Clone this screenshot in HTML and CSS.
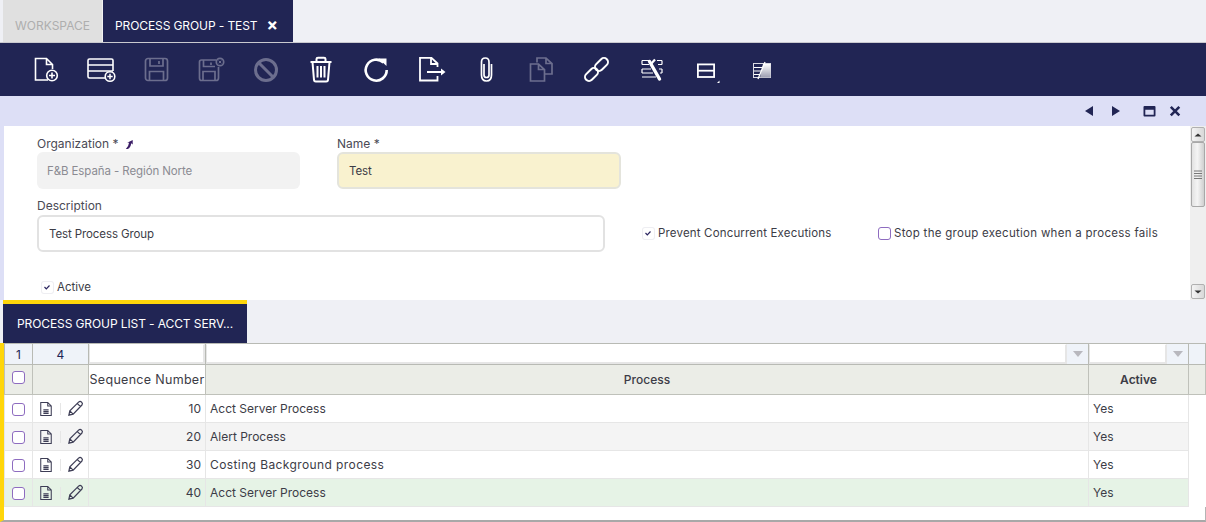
FILE: index.html
```html
<!DOCTYPE html>
<html lang="en">
<head>
<meta charset="utf-8">
<title>Process Group - Test</title>
<link rel="stylesheet" href="styles.css">
</head>
<body>
<div class="tabs">
  <div class="tab tab-off">WORKSPACE</div>
  <div class="tab tab-on"><span>PROCESS GROUP - TEST</span><span class="tab-x">×</span></div>
</div>
<div class="toolbar">
  <button class="tb"><svg viewBox="0 0 30 30" class="ic"><path d="M17 25H4.500V3.500H15.500L21.500 9.500V14M15.500 3.500V9.500H21.500" fill="none" stroke="#fff" stroke-width="1.600"/><circle cx="21" cy="20.500" r="5.300" fill="none" stroke="#fff" stroke-width="1.600"/><path d="M18 20.500h6M21 17.500v6" stroke="#fff" stroke-width="1.600"/></svg></button>
  <button class="tb"><svg viewBox="0 0 30 30" class="ic"><path d="M19 23H3.500Q2 23 2 21.500V5.500Q2 4 3.500 4H25.500Q27 4 27 5.500V16M2 10H27M2 16H27" fill="none" stroke="#fff" stroke-width="1.600"/><circle cx="24" cy="21.500" r="4.800" fill="#212554" stroke="#fff" stroke-width="1.600"/><path d="M21.300 21.500h5.400M24 18.800v5.400" stroke="#fff" stroke-width="1.500"/></svg></button>
  <button class="tb"><svg viewBox="0 0 30 30" class="ic dim"><rect x="4.500" y="3.500" width="22" height="22" rx="2.500"/><path d="M9 3.500V11H22V3.500M8.500 25.500V16.500H22.500V25.500M18 6V9"/></svg></button>
  <button class="tb"><svg viewBox="0 0 30 30" class="ic dim"><path d="M20 5H5.500Q3.500 5 3.500 7V23Q3.500 25.500 5.500 25.500H20Q22.500 25.500 22.500 23V12"/><path d="M7.500 5V11.500H19M7 25.500V16.500H19V25.500M15 7.500V10"/><circle cx="24" cy="7" r="3.700"/><path d="M22.700 5.700l2.600 2.600M25.300 5.700l-2.600 2.600" stroke-width="1"/></svg></button>
  <button class="tb"><svg viewBox="0 0 30 30" class="ic dim thick"><circle cx="15" cy="15" r="10.500"/><path d="M7.500 7.500L22.500 22.500"/></svg></button>
  <button class="tb"><svg viewBox="0 0 30 30" class="ic line"><path d="M4.500 7H25.500M10.500 7V4Q10.500 2.800 12 2.800H18Q19.500 2.800 19.500 4V7M6.500 7L8 25Q8.200 26.500 9.700 26.500H20.300Q21.800 26.500 22 25L23.500 7M11.500 11V22.500M15 11V22.500M18.500 11V22.500" stroke-width="2"/></svg></button>
  <button class="tb"><svg viewBox="0 0 30 30" class="ic line"><path d="M22.500 7.600A10.500 10.500 0 1 0 25.700 15" stroke-width="2.600"/><path d="M17.500 3.500H25.500V11Z" fill="#fff" stroke="none"/></svg></button>
  <button class="tb"><svg viewBox="0 0 30 30" class="ic line"><path d="M21.500 12V8.500L15.500 2.800H4V25.500H21.500V21M15 3V9H21.500M11 17H28" stroke-width="1.800"/><path d="M25 13.500L29.500 17L25 20.500Z" fill="#fff" stroke="none"/></svg></button>
  <button class="tb"><svg viewBox="0 0 30 30" class="ic line"><path d="M12.500 9V20Q12.500 22.500 15 22.500Q17.500 22.500 17.500 20V7Q17.500 3 13.800 3Q10 3 10 7V20Q10 26 15 26Q20 26 20 20V9" stroke-width="1.700" transform="translate(0.500 0)"/></svg></button>
  <button class="tb"><svg viewBox="0 0 30 30" class="ic dim"><path d="M11 7.500V3H20L26 8.500V19H19M20 3V8.500H26"/><path d="M4.500 9H12.500L18.500 14.500V26H4.500ZM12.500 9V14.500H18.500"/></svg></button>
  <button class="tb"><svg viewBox="0 0 30 30" class="ic line"><rect x="3" y="15.500" width="15" height="8" rx="4" transform="rotate(-45 10.500 19.500)" stroke-width="2"/><rect x="13" y="5.500" width="15" height="8" rx="4" transform="rotate(-45 20.500 9.500)" stroke-width="2"/></svg></button>
  <button class="tb"><svg viewBox="0 0 30 30" class="ic line"><path d="M6 5.500H13M21 5.500H26M6 9.500H13M22 9.500H26M6 14H15M23 14H26M6 18H17M24 18H26M6 22H20M6 5.500V9.500M26 5.500V9.500M6 14V18M26 14V18" stroke-width="1.200"/><path d="M13.500 6.500L23.500 24" stroke-width="3.400" stroke-linecap="round"/><path d="M19 4.500L14.500 9.500" stroke-width="2.200"/></svg></button>
  <button class="tb"><svg viewBox="0 0 30 30" class="ic"><rect x="6.900" y="9.400" width="16.200" height="12.600" fill="none" stroke="#fff" stroke-width="1.800"/><path d="M7 15.700H23" stroke="#fff" stroke-width="1.800"/><path d="M26 28L28.500 28L28.500 25.500Z" fill="#fff"/></svg></button>
  <button class="tb"><svg viewBox="0 0 30 30" class="ic"><defs><linearGradient id="fade" x1="0" y1="0" x2="0" y2="1"><stop offset="0" stop-color="#ffffff"/><stop offset="1" stop-color="#9b9cb0"/></linearGradient></defs><rect x="7.500" y="8.500" width="17" height="14" fill="#212554" stroke="#d9d9e2"/><path d="M17 9H24.500V22.500H14Z" fill="url(#fade)"/><path d="M8 12.500H16M8 16H15M8 19.500H14" stroke="#fff"/><path d="M19 7L12 24" stroke="#fff" stroke-width="1.300"/></svg></button>
</div>
<div class="band">
  <svg class="nav" viewBox="0 0 106 16" width="106" height="16"><path d="M5 8L13 3V13Z M32 3L40 8L32 13Z" fill="#212554"/><path d="M64.500 3H74.500Q75.500 3 75.500 4V12.500Q75.500 13.500 74.500 13.500H64.500Q63.500 13.500 63.500 12.500V4Q63.500 3 64.500 3ZM65.300 6.800V11.700H73.700V6.800Z" fill="#212554"/><path d="M90.800 3.800L99.300 12.300M99.300 3.800L90.800 12.300" stroke="#212554" stroke-width="2.600"/></svg>
</div>
<div class="form-wrap">
  <div class="form">
    <div class="row row-one">
      <div class="field f-org">
        <label class="lbl">Organization * <svg viewBox="0 0 12 12" width="11" height="11" class="jump"><path d="M2 11Q5 8 5.500 4L3.500 4L9.500 1L9.500 6L7.800 4.500Q7.500 9 4 11Z" fill="#3b1d66"/></svg></label>
        <div class="inp inp-ro">F&amp;B España - Región Norte</div>
      </div>
      <div class="field f-name">
        <label class="lbl">Name *</label>
        <div class="inp inp-req">Test</div>
      </div>
    </div>
    <div class="row row-two">
      <div class="field f-desc">
        <label class="lbl">Description</label>
        <div class="inp inp-plain">Test Process Group</div>
      </div>
      <div class="chk-item chk-prevent"><span class="cb cb-on"><svg viewBox="0 0 12 12" width="12" height="12"><path d="M3.500 6L5.300 7.800L8.500 4.500" fill="none" stroke="#2b2560" stroke-width="1.200"/></svg></span>Prevent Concurrent Executions</div>
      <div class="chk-item chk-stop"><span class="cb cb-off"></span>Stop the group execution when a process fails</div>
    </div>
    <div class="chk-item chk-active"><span class="cb cb-on"><svg viewBox="0 0 12 12" width="12" height="12"><path d="M3.500 6L5.300 7.800L8.500 4.500" fill="none" stroke="#2b2560" stroke-width="1.200"/></svg></span>Active</div>
  </div>
  <div class="scroll">
    <div class="sb-btn"><svg viewBox="0 0 12 12" width="12" height="12"><path d="M2.500 7.500L6 4.500L9.500 7.500Z" fill="#333"/></svg></div>
    <div class="sb-thumb"><svg viewBox="0 0 8 9" width="8" height="9"><path d="M0 1H8M0 3.500H8M0 6H8M0 8.500H8" stroke="#777"/></svg></div>
    <div class="sb-track"></div>
    <div class="sb-btn"><svg viewBox="0 0 12 12" width="12" height="12"><path d="M2.500 4.500L6 7.500L9.500 4.500Z" fill="#333"/></svg></div>
  </div>
</div>
<div class="section-bar"><div class="section-tab">PROCESS GROUP LIST - ACCT SERV...</div></div>
<div class="grid-wrap">
  <table class="grid">
    <colgroup><col class="c-a"><col class="c-b"><col class="c-c"><col class="c-d"><col class="c-e"><col class="c-f"></colgroup>
    <tr class="r-filter">
      <td class="count">1</td><td class="count">4</td>
      <td class="flt"><div class="flt-in"></div></td>
      <td class="flt"><div class="flt-pair"><div class="flt-in"></div><span class="arr"></span></div></td>
      <td class="flt"><div class="flt-pair"><div class="flt-in"></div><span class="arr"></span></div></td>
      <td class="flt-end"></td>
    </tr>
    <tr class="r-head">
      <th class="th-check"><span class="cb cb-off cb-head"></span></th><th></th>
      <th class="th-seq">Sequence Number</th><th>Process</th><th class="th-active">Active</th><th></th>
    </tr>
    <tr class="r-row">
      <td class="mid"><span class="cb cb-off"></span></td>
      <td><div class="acts"><svg class="a-ic" viewBox="0 0 16 18" width="14" height="16"><path d="M2 1.500H10L14 5.500V16.500H2ZM10 1.500V5.500H14M5 10H11M5 12H11M5 14H11" fill="none" stroke="#3d3d55" stroke-width="1.200"/></svg><span class="sep"></span><svg class="a-ic" viewBox="0 0 18 18" width="17" height="17"><path d="M2 16L3 11.500L12.500 2Q14 1 15.500 2.300Q17 3.800 15.800 5.300L6.500 15ZM3 11.500L6.500 15M11 3.800L14.300 7" fill="none" stroke="#3d3d55" stroke-width="1.300"/></svg></div></td>
      <td class="num">10</td><td class="txt">Acct Server Process</td><td class="txt">Yes</td><td class="blank"></td>
    </tr>
    <tr class="r-row r-alt">
      <td class="mid"><span class="cb cb-off"></span></td>
      <td><div class="acts"><svg class="a-ic" viewBox="0 0 16 18" width="14" height="16"><path d="M2 1.500H10L14 5.500V16.500H2ZM10 1.500V5.500H14M5 10H11M5 12H11M5 14H11" fill="none" stroke="#3d3d55" stroke-width="1.200"/></svg><span class="sep"></span><svg class="a-ic" viewBox="0 0 18 18" width="17" height="17"><path d="M2 16L3 11.500L12.500 2Q14 1 15.500 2.300Q17 3.800 15.800 5.300L6.500 15ZM3 11.500L6.500 15M11 3.800L14.300 7" fill="none" stroke="#3d3d55" stroke-width="1.300"/></svg></div></td>
      <td class="num">20</td><td class="txt">Alert Process</td><td class="txt">Yes</td><td class="blank"></td>
    </tr>
    <tr class="r-row">
      <td class="mid"><span class="cb cb-off"></span></td>
      <td><div class="acts"><svg class="a-ic" viewBox="0 0 16 18" width="14" height="16"><path d="M2 1.500H10L14 5.500V16.500H2ZM10 1.500V5.500H14M5 10H11M5 12H11M5 14H11" fill="none" stroke="#3d3d55" stroke-width="1.200"/></svg><span class="sep"></span><svg class="a-ic" viewBox="0 0 18 18" width="17" height="17"><path d="M2 16L3 11.500L12.500 2Q14 1 15.500 2.300Q17 3.800 15.800 5.300L6.500 15ZM3 11.500L6.500 15M11 3.800L14.300 7" fill="none" stroke="#3d3d55" stroke-width="1.300"/></svg></div></td>
      <td class="num">30</td><td class="txt wide">Costing Background process</td><td class="txt">Yes</td><td class="blank"></td>
    </tr>
    <tr class="r-row r-sel">
      <td class="mid"><span class="cb cb-off"></span></td>
      <td><div class="acts"><svg class="a-ic" viewBox="0 0 16 18" width="14" height="16"><path d="M2 1.500H10L14 5.500V16.500H2ZM10 1.500V5.500H14M5 10H11M5 12H11M5 14H11" fill="none" stroke="#3d3d55" stroke-width="1.200"/></svg><span class="sep"></span><svg class="a-ic" viewBox="0 0 18 18" width="17" height="17"><path d="M2 16L3 11.500L12.500 2Q14 1 15.500 2.300Q17 3.800 15.800 5.300L6.500 15ZM3 11.500L6.500 15M11 3.800L14.300 7" fill="none" stroke="#3d3d55" stroke-width="1.300"/></svg></div></td>
      <td class="num">40</td><td class="txt">Acct Server Process</td><td class="txt">Yes</td><td class="blank"></td>
    </tr>
  </table>
</div>
</body>
</html>
```
FILE: styles.css
```css
* { box-sizing: border-box; }
html, body { margin: 0; padding: 0; }
body {
  width: 1206px; height: 522px; overflow: hidden; background: #fff;
  font-family: Inter, "Open Sans", sans-serif; font-size: 11.5px; color: #3c3c46;
}
.tabs { display: flex; height: 43px; padding-left: 3px; background: #eff0f5; border-bottom: 1px solid #c9c9cf; }
.tab { height: 42px; display: flex; align-items: center; font-size: 12px; padding-top: 8px; }
.tab-off { width: 100px; padding-left: 12px; background: #e0e0e0; color: #aeaeae; border-right: 1px solid #f2f2f2; }
.tab-on { width: 190px; padding-left: 12px; background: #212554; color: #fff; letter-spacing: -0.1px; }
.tab-x { margin-left: 9px; font-size: 17px; font-weight: 700; line-height: 1; }
.toolbar { display: flex; align-items: center; height: 53px; padding-left: 18px; background: #212554; }
.tb { width: 55px; height: 30px; padding: 0; border: 0; background: none; display: flex; justify-content: center; }
.ic { width: 30px; height: 30px; display: block; }
.dim { fill: none; stroke: #6c6e8e; stroke-width: 1.700; }
.thick { stroke-width: 3; }
.line { fill: none; stroke: #fff; }
.band { height: 30px; background: #dddff6; display: flex; justify-content: flex-end; align-items: center; padding-right: 20px; }
.nav { display: block; }
.form-wrap { display: flex; height: 174px; padding-left: 4px; background: linear-gradient(#dddff6, #dddff6) left / 4px 100% no-repeat #fff; }
.form { width: 1186px; padding: 10px 0 0 33px; }
.row { display: flex; }
.row-one { height: 62px; }
.row-two { height: 63px; align-items: flex-start; }
.field { display: flex; flex-direction: column; }
.lbl { height: 16px; line-height: 15px; font-size: 12px; color: #4a4a55; }
.f-org { width: 300px; }
.f-name { width: 284px; }
.f-desc { width: 605px; }
.jump { margin-left: 2px; vertical-align: -2px; }
.inp { height: 37px; display: flex; align-items: center; border-radius: 6px; font-size: 11.500px; letter-spacing: -0.1px; }
.inp-ro { width: 263px; background: #f2f2f2; color: #8b8b92; padding-left: 10px; }
.inp-req { width: 284px; background: #f9f2cf; border: 2px solid #e4e4dc; padding-left: 10px; }
.inp-plain { width: 568px; background: #fff; border: 2px solid #e2e2e2; padding-left: 10px; }
.row-two .field .inp { margin-top: 1px; }
.chk-item { display: flex; align-items: center; color: #3c3c46; font-size: 11.500px; height: 16px; }
.chk-prevent { margin-top: 27px; width: 236px; letter-spacing: 0.17px; }
.chk-stop { margin-top: 27px; letter-spacing: 0.28px; }
.chk-active { margin: 18px 0 0 4px; }
.cb { display: inline-block; width: 13px; height: 13px; border-radius: 3px; flex: none; }
.cb svg { display: block; }
.cb-on { border: 0; background: #fff; box-shadow: inset 0 0 0 1px #eeeef2; margin-right: 3px; }
.cb-off { border: 1px solid #8e6cc0; background: #fff; margin-right: 3px; }
.scroll { width: 16px; display: flex; flex-direction: column; background: #efefef; padding: 1px; }
.sb-btn { height: 15px; border: 1px solid #b0b0b0; background: linear-gradient(90deg, #f4f4f4, #d8d8d8); display: flex; align-items: center; justify-content: center; border-radius: 2px; }
.sb-thumb { height: 65px; border: 1px solid #a8a8a8; background: linear-gradient(90deg, #e2e2e2, #f4f4f4 45%, #cfcfcf); border-radius: 2px; display: flex; align-items: center; justify-content: center; }
.sb-track { flex: 1; }
.section-bar { height: 43px; background: #eff0f5; padding-left: 3px; }
.section-tab { width: 244px; height: 43px; background: #212554; border-top: 4px solid #ffd60a; color: #fff; font-size: 12px; padding: 0 0 0 14px; line-height: 39px; white-space: nowrap; letter-spacing: -0.1px; }
.grid-wrap { height: 179px; background: #fff; border-left: 4px solid #ffd60a; border-right: 1px solid #b4b4b4; border-bottom: 2px solid #a8a8a8; }
.grid { border-collapse: collapse; table-layout: fixed; width: 1201px; }
.c-a { width: 28px; } .c-b { width: 56px; } .c-c { width: 117px; } .c-d { width: 883px; } .c-e { width: 100px; } .c-f { width: 17px; }
.grid td, .grid th { padding: 0; overflow: hidden; white-space: nowrap; }
.r-filter td { height: 21px; background: #eff3f9; border: 1px solid #b8bab4; }
.count { text-align: center; color: #212554; font-size: 12px; }
.flt-in { height: 20px; background: #fff; flex: 1; border: 1px solid #e6e6e6; border-top-color: #fff; border-right-width: 2px; border-bottom-width: 2px; }
.flt-pair { display: flex; align-items: center; }
.arr { width: 21px; display: flex; justify-content: center; }
.arr::before { content: ""; border: 5px solid transparent; border-top: 6px solid #b8b8be; border-bottom: 0; }
.r-head th { height: 30px; background: #ebede7; border: 1px solid #bfc1ba; font-weight: 500; color: #3c3c46; font-size: 12px; text-align: center; }
.r-head .th-seq { background: #fff; font-weight: 400; font-size: 12.500px; letter-spacing: 0.3px; }
.r-head .th-active { font-weight: 600; }
.grid .th-check { vertical-align: top; padding-top: 6px; }
.cb-head { margin: 0; display: block; margin-left: 7px; }
.r-row td { height: 28px; background: #fff; border: 1px solid #e6e6e6; font-size: 12px; }
.r-row.r-alt td { background: #f4f4f4; }
.r-row.r-sel td { background: #e6f3e6; }
.r-row td.blank { background: #fff; border-width: 0 0 0 1px; }
.mid { text-align: center; }
.mid .cb { margin: 0; vertical-align: middle; }
.acts { display: flex; align-items: center; justify-content: space-between; padding: 0 4px 0 6px; }
.a-ic { display: block; }
.sep { width: 1px; height: 12px; background: #e6e6e6; }
.grid td.num { text-align: right; padding-right: 4px; }
.grid td.txt { padding-left: 4px; }
.grid td.wide { letter-spacing: 0.4px; }
```
